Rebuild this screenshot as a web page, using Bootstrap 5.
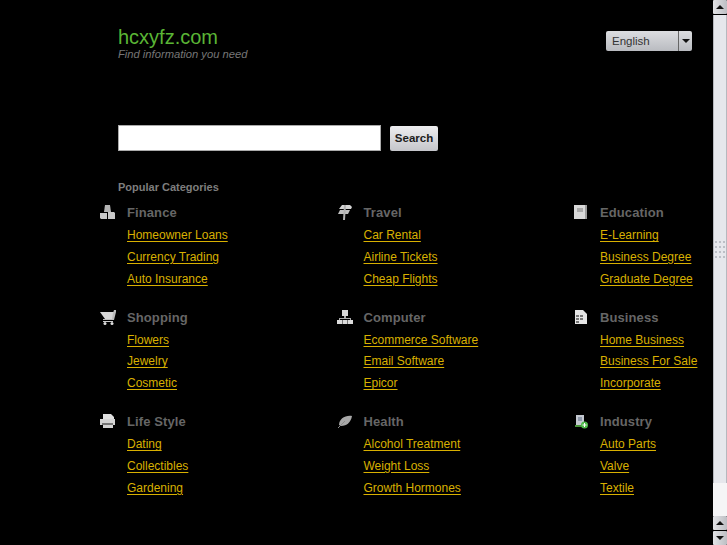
<!DOCTYPE html>
<html lang="en">
<head>
<meta charset="utf-8">
<title>hcxyfz.com</title>
<link href="https://cdn.jsdelivr.net/npm/bootstrap@5.3.0/dist/css/bootstrap.min.css" rel="stylesheet">
<style>
html,body{height:100%;overflow:hidden}
body{background:#000;font-family:"Liberation Sans",Arial,sans-serif;color:#888}
.shell{height:545px;width:727px}
.pagearea{width:713px;height:545px;padding:26px 0 0 100px;overflow:hidden}
.headrow{padding-left:18px;padding-right:21px;height:99px}
.sitename{font-size:20px;line-height:22px;color:#5ab535;margin:0;font-weight:400}
.tagline{font-size:11.2px;line-height:12px;color:#777;font-style:italic;margin:0}
.langbox{width:86px;height:20px;margin-top:5px;border-radius:2px;background:linear-gradient(#dcdde0,#b9bbc0);color:#333;font-size:11.5px;line-height:21px}
.langname{padding-left:6px}
.langarrow{width:14px;border-left:1px solid #666;height:100%}
.arrowdown{width:0;height:0;border-left:4px solid transparent;border-right:4px solid transparent;border-top:4px solid #111}
.arrowup{width:0;height:0;border-left:4px solid transparent;border-right:4px solid transparent;border-bottom:4px solid #111}
.searchrow{padding-left:18px;gap:9px;height:26px}
.searchfield{width:263px;height:26px;background:#fff;border:1px solid #aaa;border-radius:0;padding:0 4px}
.searchgo{width:48px;height:25px;margin-top:1px;padding:0 0 2px;border:0;border-radius:2px;background:linear-gradient(#eeeef0,#c4c5ca);color:#1c1c1c;font-size:11.5px;font-weight:700;line-height:22px}
.popular{padding-left:18px;margin:29px 0 0;font-size:11px;font-weight:700;color:#7e7e7e;line-height:14px;height:16px}
.catgrid{display:grid;grid-template-columns:repeat(3,236.5px);grid-auto-rows:104.5px;margin-top:9px}
.catcell{display:flex}
.caticon{width:27px;flex:none}
.caticon svg{display:block;width:16px;height:16px;margin-top:-1px;filter:blur(.35px)}
.catname{font-size:13px;font-weight:700;color:#666;line-height:16px;margin:0 0 3px;letter-spacing:.1px}
.catlinks{list-style:none;margin:0;padding:0}
.catlinks li{height:21.8px;line-height:22px;font-size:12px;white-space:nowrap}
.catlinks a{color:#d8b000;text-decoration:underline;text-underline-offset:2px}
.fakebar{width:14px;height:545px;background:#000}
.sbtn{height:14px;background:linear-gradient(90deg,#e2e3e6,#bdbec3);border-radius:1px;margin-bottom:1px}
.sthumb{height:468px;background:#e6e7ec;border:1px solid #b6b8be;border-width:0 1px}
.sgrip{display:grid;grid-template-columns:repeat(3,2px);gap:3px 2px;width:10px}
.sgrip span{height:2px;background:#bcbfc6}
.strack{height:33px;background:#f5f5f6}
</style>
</head>
<body>
<div class="shell d-flex">
  <div class="pagearea">
    <div class="headrow d-flex justify-content-between align-items-start">
      <div>
        <h1 class="sitename">hcxyfz.com</h1>
        <p class="tagline">Find information you need</p>
      </div>
      <div class="langbox d-flex justify-content-between">
        <span class="langname">English</span>
        <span class="langarrow d-flex align-items-center justify-content-center"><span class="arrowdown"></span></span>
      </div>
    </div>
    <form class="searchrow d-flex">
      <input class="searchfield" type="text" aria-label="Search">
      <button class="searchgo" type="button">Search</button>
    </form>
    <p class="popular">Popular Categories</p>
    <div class="catgrid">
      <div class="catcell">
        <div class="caticon"><svg viewBox="0 0 16 16"><path d="M5 1h5l1 7H4z" fill="#b4b4b4"/><path d="M0 9h7v6H1l-1-1zM8 8h6l1 1v6H8z" fill="#c9c9c9"/></svg></div>
        <div><h2 class="catname">Finance</h2><ul class="catlinks"><li><a href="#">Homeowner Loans</a></li><li><a href="#">Currency Trading</a></li><li><a href="#">Auto Insurance</a></li></ul></div>
      </div>
      <div class="catcell">
        <div class="caticon"><svg viewBox="0 0 16 16"><path d="M5 1h8l2 2-1 2H2z" fill="#d4d4d4"/><path d="M3 6h10l-2 4H1z" fill="#c0c0c0"/><path d="M7 1h2l-1 15H6z" fill="#b0b0b0"/></svg></div>
        <div><h2 class="catname">Travel</h2><ul class="catlinks"><li><a href="#">Car Rental</a></li><li><a href="#">Airline Tickets</a></li><li><a href="#">Cheap Flights</a></li></ul></div>
      </div>
      <div class="catcell">
        <div class="caticon"><svg viewBox="0 0 16 16"><rect x="1" y="1" width="13" height="14" fill="#d8d8d8"/><rect x="12" y="1" width="2" height="14" fill="#9b9b9b"/><rect x="4" y="4" width="6" height="4" fill="#a8a8a8"/></svg></div>
        <div><h2 class="catname">Education</h2><ul class="catlinks"><li><a href="#">E-Learning</a></li><li><a href="#">Business Degree</a></li><li><a href="#">Graduate Degree</a></li></ul></div>
      </div>
      <div class="catcell">
        <div class="caticon"><svg viewBox="0 0 16 16"><path d="M0 3h15l-2 7H5z" fill="#d6d6d6"/><path d="M13 4l1-3h2v2l-2 8H3v-1h9z" fill="#bbb"/><path d="M3 12h10v1H3z" fill="#ccc"/><circle cx="5" cy="14.500" r="1.500" fill="#ddd"/><circle cx="12" cy="14.500" r="1.500" fill="#ddd"/></svg></div>
        <div><h2 class="catname">Shopping</h2><ul class="catlinks"><li><a href="#">Flowers</a></li><li><a href="#">Jewelry</a></li><li><a href="#">Cosmetic</a></li></ul></div>
      </div>
      <div class="catcell">
        <div class="caticon"><svg viewBox="0 0 16 16"><rect x="5" y="1" width="6" height="6" fill="#d8d8d8"/><path d="M7 7h2v2h5v2h-1v-1H3v1H2V9h5z" fill="#aaa"/><rect x="0" y="11" width="16" height="4" fill="#dcdcdc"/><path d="M5 11h1v4H5zM10 11h1v4h-1z" fill="#777"/></svg></div>
        <div><h2 class="catname">Computer</h2><ul class="catlinks"><li><a href="#">Ecommerce Software</a></li><li><a href="#">Email Software</a></li><li><a href="#">Epicor</a></li></ul></div>
      </div>
      <div class="catcell">
        <div class="caticon"><svg viewBox="0 0 16 16"><path d="M2 1h8l4 4v10H2z" fill="#e6e6e6"/><path d="M3 6h3v2H3zM7 6h3v2H7zM3 9h3v2H3zM7 9h3v2H7zM3 12h3v2H3z" fill="#777"/></svg></div>
        <div><h2 class="catname">Business</h2><ul class="catlinks"><li><a href="#">Home Business</a></li><li><a href="#">Business For Sale</a></li><li><a href="#">Incorporate</a></li></ul></div>
      </div>
      <div class="catcell">
        <div class="caticon"><svg viewBox="0 0 16 16"><path d="M3 1h8l3 3v4H3z" fill="#e0e0e0"/><path d="M0 6h15v6h-2v3H3v-3H0z" fill="#d4d4d4"/><path d="M2 10h11v2H2z" fill="#777"/></svg></div>
        <div><h2 class="catname">Life Style</h2><ul class="catlinks"><li><a href="#">Dating</a></li><li><a href="#">Collectibles</a></li><li><a href="#">Gardening</a></li></ul></div>
      </div>
      <div class="catcell">
        <div class="caticon"><svg viewBox="0 0 16 16"><path d="M2 12C2 6 8 2 15 3c-1 6-5 10-11 10z" fill="#a8a8a8"/><path d="M1 15L8 8" stroke="#8a8a8a" fill="none"/></svg></div>
        <div><h2 class="catname">Health</h2><ul class="catlinks"><li><a href="#">Alcohol Treatment</a></li><li><a href="#">Weight Loss</a></li><li><a href="#">Growth Hormones</a></li></ul></div>
      </div>
      <div class="catcell">
        <div class="caticon"><svg viewBox="0 0 16 16"><rect x="3" y="2" width="8" height="11" fill="#c4c8d0"/><rect x="5" y="4" width="4" height="4" fill="#8d97a8"/><rect x="2" y="12" width="8" height="2" fill="#49933a"/><circle cx="11.500" cy="12" r="3.500" fill="#4cb848"/><path d="M9.500 12h4M11.500 10v4" stroke="#fff"/></svg></div>
        <div><h2 class="catname">Industry</h2><ul class="catlinks"><li><a href="#">Auto Parts</a></li><li><a href="#">Valve</a></li><li><a href="#">Textile</a></li></ul></div>
      </div>
    </div>
  </div>
  <div class="fakebar" aria-hidden="true">
    <div class="sbtn d-flex align-items-center justify-content-center"><span class="arrowup"></span></div>
    <div class="sthumb d-flex align-items-center justify-content-center"><div class="sgrip"><span></span><span></span><span></span><span></span><span></span><span></span><span></span><span></span><span></span><span></span><span></span><span></span></div></div>
    <div class="strack"></div>
    <div class="sbtn d-flex align-items-center justify-content-center"><span class="arrowup"></span></div>
    <div class="sbtn d-flex align-items-center justify-content-center"><span class="arrowdown"></span></div>
  </div>
</div>
<script src="https://cdn.jsdelivr.net/npm/bootstrap@5.3.0/dist/js/bootstrap.bundle.min.js"></script>
</body>
</html>
